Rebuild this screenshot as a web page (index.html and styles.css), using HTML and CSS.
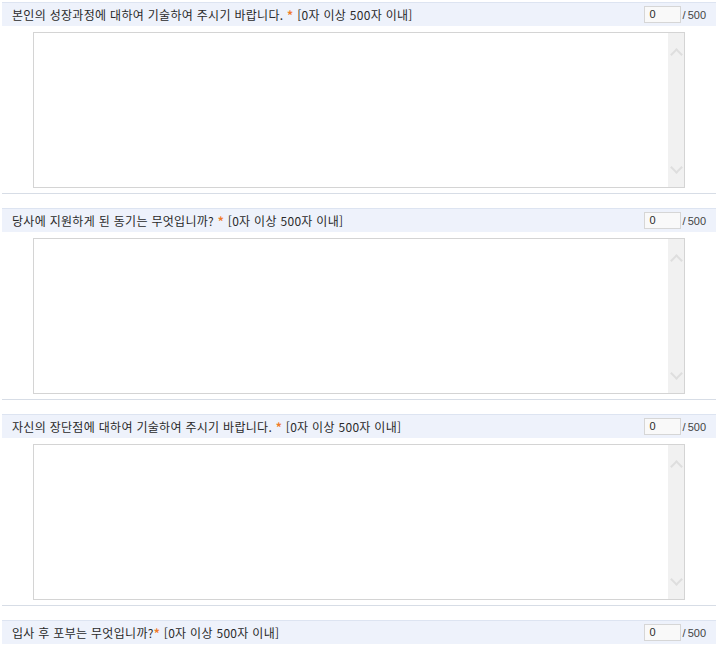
FILE: index.html
```html
<!DOCTYPE html>
<html lang="ko">
<head>
<meta charset="utf-8">
<link rel="stylesheet" href="styles.css">
</head>
<body>
<div class="list">
  <section class="item">
    <div class="head">
      <span class="q">본인의 성장과정에 대하여 기술하여 주시기 바랍니다. <em>*</em> [0자 이상 500자 이내]</span>
      <span class="cnt"><span class="num">0</span><span class="max">/ 500</span></span>
    </div>
    <div class="box">
      <textarea class="ta"></textarea>
      <div class="sb"><span class="up"></span><span class="down"></span></div>
    </div>
  </section>
  <section class="item">
    <div class="head">
      <span class="q">당사에 지원하게 된 동기는 무엇입니까? <em>*</em> [0자 이상 500자 이내]</span>
      <span class="cnt"><span class="num">0</span><span class="max">/ 500</span></span>
    </div>
    <div class="box">
      <textarea class="ta"></textarea>
      <div class="sb"><span class="up"></span><span class="down"></span></div>
    </div>
  </section>
  <section class="item">
    <div class="head">
      <span class="q">자신의 장단점에 대하여 기술하여 주시기 바랍니다. <em>*</em> [0자 이상 500자 이내]</span>
      <span class="cnt"><span class="num">0</span><span class="max">/ 500</span></span>
    </div>
    <div class="box">
      <textarea class="ta"></textarea>
      <div class="sb"><span class="up"></span><span class="down"></span></div>
    </div>
  </section>
  <section class="item">
    <div class="head">
      <span class="q">입사 후 포부는 무엇입니까?<em>*</em> [0자 이상 500자 이내]</span>
      <span class="cnt"><span class="num">0</span><span class="max">/ 500</span></span>
    </div>
    <div class="box">
      <textarea class="ta"></textarea>
      <div class="sb"><span class="up"></span><span class="down"></span></div>
    </div>
  </section>
</div>
</body>
</html>
```
FILE: styles.css
```css
html, body { margin: 0; padding: 0; background: #fff; }
body {
  font-family: "Noto Sans CJK KR", "Noto Sans", sans-serif;
  font-size: 12px;
  color: #2a2a2a;
}
.list { padding: 2px 2px 0 2px; }
.item {
  border-bottom: 1px solid #d7dde6;
  padding-bottom: 5px;
  margin-bottom: 14px;
}
.head {
  height: 23px;
  border-top: 1px solid #dde4f1;
  background: #eef2fb;
  display: flex;
  align-items: center;
  justify-content: space-between;
  padding-left: 10px;
  padding-right: 10px;
}
.q { line-height: 14px; letter-spacing: 0.3px; }
.q em { font-style: normal; font-weight: bold; color: #f07a2a; }
.cnt { display: flex; align-items: center; gap: 2px; }
.num {
  box-sizing: border-box;
  width: 37px; height: 17px;
  border: 1px solid #d6d6d6;
  background: #f9f9f9;
  padding-left: 5px;
  line-height: 15px;
  font-family: "Liberation Sans", sans-serif;
  font-size: 11px;
}
.max { font-family: "Liberation Sans", sans-serif; font-size: 11px; color: #444; word-spacing: -1px; }
.box {
  box-sizing: border-box;
  margin: 6px 0 0 31px;
  width: 652px;
  height: 156px;
  border: 1px solid #d4d4d4;
  display: flex;
}
.ta {
  flex: 1;
  border: 0;
  margin: 0;
  padding: 0;
  resize: none;
  outline: none;
  background: #fff;
}
.sb {
  width: 16px;
  background: #f1f1f1;
  display: flex;
  flex-direction: column;
  justify-content: space-between;
  align-items: center;
  padding: 17px 0 15px;
}
.up, .down {
  width: 7px; height: 7px;
  border-left: 2px solid #dedede;
  border-top: 2px solid #dedede;
}
.up { transform: rotate(45deg); }
.down { transform: rotate(-135deg); }
```
